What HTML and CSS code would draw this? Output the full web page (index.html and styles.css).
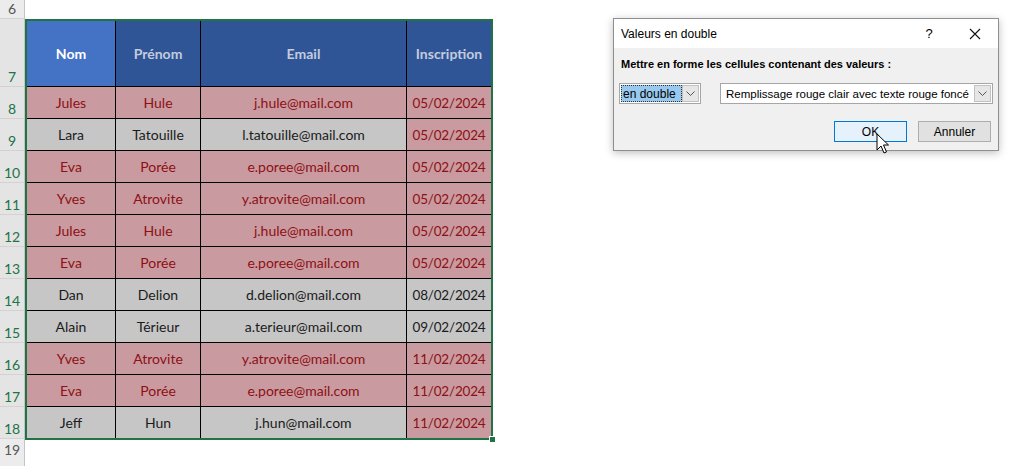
FILE: index.html
```html
<!DOCTYPE html>
<html lang="fr">
<head>
    <meta charset="UTF-8">
    <title>Valeurs en double</title>
    <link rel="stylesheet" href="styles.css">
</head>
<body>
    <div class="sheet">
        <div class="row-heads">
            <div class="rh short plain">6</div>
            <div class="rh tall">7</div>
            <div class="rh">8</div>
            <div class="rh">9</div>
            <div class="rh">10</div>
            <div class="rh">11</div>
            <div class="rh">12</div>
            <div class="rh">13</div>
            <div class="rh">14</div>
            <div class="rh">15</div>
            <div class="rh">16</div>
            <div class="rh">17</div>
            <div class="rh">18</div>
            <div class="rh last plain">19</div>
        </div>

        <div class="cells">
            <div class="selection">
                <div class="table">
                    <div class="hd first">Nom</div>
                    <div class="hd">Prénom</div>
                    <div class="hd">Email</div>
                    <div class="hd">Inscription</div>

                    <div class="dup">Jules</div><div class="dup">Hule</div><div class="dup">j.hule@mail.com</div><div class="dup date">05/02/2024</div>
                    <div class="uniq">Lara</div><div class="uniq">Tatouille</div><div class="uniq">l.tatouille@mail.com</div><div class="dup date">05/02/2024</div>
                    <div class="dup">Eva</div><div class="dup">Porée</div><div class="dup">e.poree@mail.com</div><div class="dup date">05/02/2024</div>
                    <div class="dup">Yves</div><div class="dup">Atrovite</div><div class="dup">y.atrovite@mail.com</div><div class="dup date">05/02/2024</div>
                    <div class="dup">Jules</div><div class="dup">Hule</div><div class="dup">j.hule@mail.com</div><div class="dup date">05/02/2024</div>
                    <div class="dup">Eva</div><div class="dup">Porée</div><div class="dup">e.poree@mail.com</div><div class="dup date">05/02/2024</div>
                    <div class="uniq">Dan</div><div class="uniq">Delion</div><div class="uniq">d.delion@mail.com</div><div class="uniq date">08/02/2024</div>
                    <div class="uniq">Alain</div><div class="uniq">Térieur</div><div class="uniq">a.terieur@mail.com</div><div class="uniq date">09/02/2024</div>
                    <div class="dup">Yves</div><div class="dup">Atrovite</div><div class="dup">y.atrovite@mail.com</div><div class="dup date">11/02/2024</div>
                    <div class="dup">Eva</div><div class="dup">Porée</div><div class="dup">e.poree@mail.com</div><div class="dup date">11/02/2024</div>
                    <div class="uniq">Jeff</div><div class="uniq">Hun</div><div class="uniq">j.hun@mail.com</div><div class="dup date">11/02/2024</div>
                </div>
                <div class="handle"></div>
            </div>
        </div>
    </div>

    <!-- Mise en forme conditionnelle : boite de dialogue -->
    <div class="dialog">
        <div class="dlg-title">
            <span class="dlg-name">Valeurs en double</span>
            <span class="dlg-help">?</span>
            <span class="dlg-close">
                <svg width="12" height="12" viewBox="0 0 12 12"><path d="M1 1 L11 11 M11 1 L1 11" stroke="#111" stroke-width="1.1" fill="none"/></svg>
            </span>
        </div>
        <div class="dlg-body">
            <p class="dlg-label">Mettre en forme les cellules contenant des valeurs :</p>
            <div class="dlg-combos">
                <div class="combo combo-small">
                    <span class="combo-text"><span class="picked">en double</span></span>
                    <span class="combo-btn"><svg width="9" height="5" viewBox="0 0 9 5"><path d="M0.5 0.5 L4.5 4.5 L8.5 0.5" stroke="#555" fill="none"/></svg></span>
                </div>
                <div class="combo combo-wide">
                    <span class="combo-text">Remplissage rouge clair avec texte rouge foncé</span>
                    <span class="combo-btn"><svg width="9" height="5" viewBox="0 0 9 5"><path d="M0.5 0.5 L4.5 4.5 L8.5 0.5" stroke="#555" fill="none"/></svg></span>
                </div>
            </div>
            <div class="dlg-buttons">
                <button class="btn btn-ok">OK</button>
                <button class="btn">Annuler</button>
            </div>
        </div>
    </div>

    <svg class="cursor" width="14" height="22" viewBox="0 0 14 22">
        <path d="M1 1 L1 17 L5 13 L8 20 L10.5 19 L7.5 12 L12.5 12 Z" fill="#fff" stroke="#000" stroke-width="1" stroke-linejoin="miter"/>
    </svg>
</body>
</html>
```

FILE: styles.css
```css
* {
    margin: 0;
    padding: 0;
    box-sizing: border-box;
}

body {
    font-family: Lato, "Liberation Sans", sans-serif;
    background: #fff;
    width: 1012px;
    height: 466px;
    overflow: hidden;
    position: relative;
}

.sheet {
    display: flex;
    height: 466px;
}

/* numeros de lignes */
.row-heads {
    width: 25px;
    flex: none;
    background: #e4e4e4;
    border-right: 1px solid #c4c4c4;
    display: flex;
    flex-direction: column;
}

.rh {
    height: 32px;
    display: flex;
    align-items: flex-end;
    justify-content: center;
    padding-bottom: 1px;
    border-bottom: 1px solid #d2d2d2;
    color: #217346;
    font-size: 14px;
    line-height: 16px;
}

.rh.short {
    height: 19px;
    padding-bottom: 1px;
}

.rh.tall {
    height: 68px;
}

.rh.last {
    height: 27px;
    align-items: flex-start;
    padding-top: 3px;
    border-bottom: none;
}

.rh.plain {
    color: #555;
    background: #ececec;
}

/* zone des cellules */
.cells {
    flex: 1;
    padding-top: 19px;
}

.selection {
    position: relative;
    display: inline-block;
    border: 2px solid #217346;
}

.table {
    display: grid;
    grid-template-columns: 88px 84px 205px 84px;
    grid-template-rows: 65px repeat(11, 31px);
    gap: 1px;
    background: #000;
}

.table > div {
    display: flex;
    align-items: center;
    justify-content: center;
    font-size: 14px;
}

.table > .date {
    font-size: 13.5px;
    letter-spacing: -0.2px;
}

.hd {
    background: #2f5597;
    color: #c3cbdd;
    font-weight: bold;
}

.hd.first {
    background: #4472c4;
    color: #fff;
}

.dup {
    background: #c99a9f;
    color: #8e1014;
}

.uniq {
    background: #c6c6c6;
    color: #1b1b1b;
}

.handle {
    position: absolute;
    right: -5px;
    bottom: -5px;
    width: 7px;
    height: 7px;
    background: #217346;
    border: 1px solid #fff;
}

/* boite de dialogue */
.dialog {
    position: absolute;
    left: 613px;
    top: 18px;
    width: 386px;
    height: 133px;
    background: #f0f0f0;
    border: 1px solid #8f8f8f;
    box-shadow: 0 2px 8px rgba(0, 0, 0, 0.25);
    font-family: "Liberation Sans", Arial, sans-serif;
    font-size: 11px;
    color: #000;
}

.dlg-title {
    height: 29px;
    background: #fff;
    display: flex;
    align-items: center;
    padding-left: 7px;
    font-size: 12px;
}

.dlg-name {
    flex: 1;
}

.dlg-help {
    width: 46px;
    text-align: center;
    font-size: 13px;
}

.dlg-close {
    width: 46px;
    display: flex;
    justify-content: center;
    align-items: center;
}

.dlg-body {
    padding: 9px 5px 0 5px;
}

.dlg-label {
    font-weight: bold;
    line-height: 15px;
    padding-left: 2px;
}

.dlg-combos {
    display: flex;
    gap: 19px;
    margin-top: 11px;
}

.combo {
    height: 21px;
    display: flex;
    align-items: stretch;
    border: 1px solid #a6a6a6;
    background: #fff;
    padding: 1px;
}

.combo-small {
    width: 82px;
}

.combo-wide {
    width: 273px;
    font-size: 11.5px;
}

.combo-text {
    flex: 1;
    display: flex;
    align-items: center;
    padding-left: 4px;
    white-space: nowrap;
    overflow: hidden;
}

.combo-small .combo-text {
    padding-left: 0;
}

.picked {
    background: #99c9ef;
    border: 1px dotted #333;
    height: 17px;
    width: 62px;
    display: flex;
    align-items: center;
    padding-left: 1px;
    font-size: 12px;
}

.combo-btn {
    width: 17px;
    background: #e6e6e6;
    border: 1px solid #c2c2c2;
    display: flex;
    align-items: center;
    justify-content: center;
}

.dlg-buttons {
    display: flex;
    justify-content: flex-end;
    gap: 11px;
    margin-top: 17px;
    padding-right: 2px;
}

.btn {
    width: 73px;
    height: 21px;
    background: #e1e1e1;
    border: 1px solid #adadad;
    font-family: inherit;
    font-size: 12px;
    color: #000;
}

.btn-ok {
    background: #e5f1fb;
    border-color: #0078d7;
}

.cursor {
    position: absolute;
    left: 876px;
    top: 133px;
}
```
